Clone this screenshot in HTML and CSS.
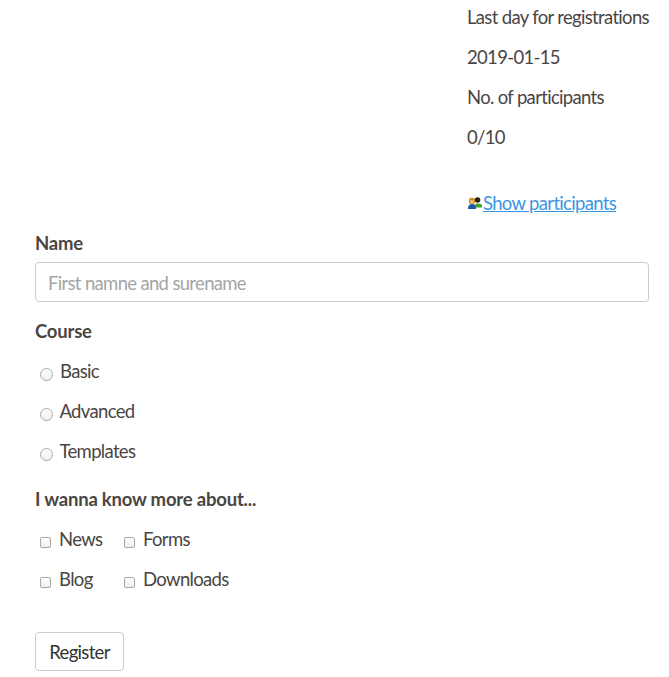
FILE: index.html
```html
<!DOCTYPE html>
<html>
<head>
    <meta charset="utf-8">
    <title>Register</title>
    <link rel="stylesheet" href="styles.css">
</head>
<body>
    <div class="info">
        <p>Last day for registrations</p>
        <p>2019-01-15</p>
        <p>No. of participants</p>
        <p>0/10</p>
        <p class="show-row">
            <svg class="people-icon" width="16" height="14" viewBox="0 0 16 14">
                <circle cx="10.500" cy="4" r="2.800" fill="#2b2410"/>
                <path d="M7 11.500c0-2.500 1.500-4 3.500-4s4 .5 4.500 1.500v2.500z" fill="#3fa32f"/>
                <circle cx="5" cy="5" r="3.200" fill="#c98a2a"/>
                <circle cx="5" cy="5.800" r="1.900" fill="#f0c070"/>
                <path d="M1 13c0-3.500 1.500-5 4-5s4 1.500 4 5z" fill="#1f55a5"/>
            </svg><a href="#">Show participants</a>
        </p>
    </div>

    <form class="register-form">
        <div class="form-group">
            <label class="group-label name-label" for="name">Name</label>
            <input type="text" id="name" class="text-input" placeholder="First namne and surename">
        </div>

        <div class="form-group">
            <div class="group-label">Course</div>
            <label class="radio-row"><input type="radio" name="course"> Basic</label>
            <label class="radio-row"><input type="radio" name="course"> Advanced</label>
            <label class="radio-row"><input type="radio" name="course"> Templates</label>
        </div>

        <div class="form-group">
            <div class="group-label">I wanna know more about...</div>
            <div class="check-grid">
                <label class="check-row"><input type="checkbox"> News</label>
                <label class="check-row"><input type="checkbox"> Forms</label>
                <label class="check-row"><input type="checkbox"> Blog</label>
                <label class="check-row"><input type="checkbox"> Downloads</label>
            </div>
        </div>

        <button type="button" class="button-register">Register</button>
    </form>
</body>
</html>
```

FILE: styles.css
```css
body {
    font-family: "Lato", "Liberation Sans", sans-serif;
    font-size: 18.5px;
    font-weight: 400;
    letter-spacing: -0.67px;
    line-height: 24px;
    color: #4a4543;
    background: white;
    margin: 0;
    padding: 5px 20px 6px 35px;
}

.info {
    margin-left: 432px;
}

.info p {
    margin: 0 0 16px 0;
    white-space: nowrap;
}

.info .show-row {
    margin: 42px 0 16px 0;
    display: flex;
    align-items: center;
}

.people-icon {
    flex-shrink: 0;
}

.show-row a {
    color: #3b97e3;
}

.form-group {
    margin-bottom: 17px;
}

.form-group:nth-child(2) {
    margin-bottom: 24px;
}

.group-label {
    display: block;
    font-weight: 700;
    letter-spacing: -0.2px;
    margin-bottom: 16px;
}

.name-label {
    margin-bottom: 7px;
}

.text-input {
    display: block;
    box-sizing: border-box;
    width: 100%;
    height: 40px;
    padding: 1px 12px 0 12px;
    border: 1px solid #ccc;
    border-radius: 4px;
    font: inherit;
    letter-spacing: inherit;
    color: #4a4543;
}

.text-input::placeholder {
    color: #a5a5a5;
}

.radio-row {
    display: block;
    padding-left: 5px;
    margin-bottom: 16px;
}

.radio-row:last-child {
    margin-bottom: 0;
}

.radio-row input, .check-row input {
    appearance: none;
    box-sizing: border-box;
    width: 13px;
    height: 13px;
    margin: 0 3px 0 0;
    vertical-align: -3px;
    background: linear-gradient(#fff, #f0f0f0);
    border: 1px solid #a8a8a8;
}

.radio-row input {
    border-radius: 50%;
}

.check-row input {
    width: 11px;
    height: 11px;
    margin-right: 4px;
    vertical-align: -2px;
    border-radius: 2px;
}

.check-grid {
    display: grid;
    grid-template-columns: 84px auto;
    justify-content: start;
    row-gap: 16px;
    padding-left: 5px;
}

.button-register {
    display: block;
    margin-top: 41px;
    width: 89px;
    height: 39px;
    padding: 0;
    background: white;
    border: 1px solid #ccc;
    border-radius: 4px;
    font: inherit;
    letter-spacing: inherit;
    color: #333;
}
```
